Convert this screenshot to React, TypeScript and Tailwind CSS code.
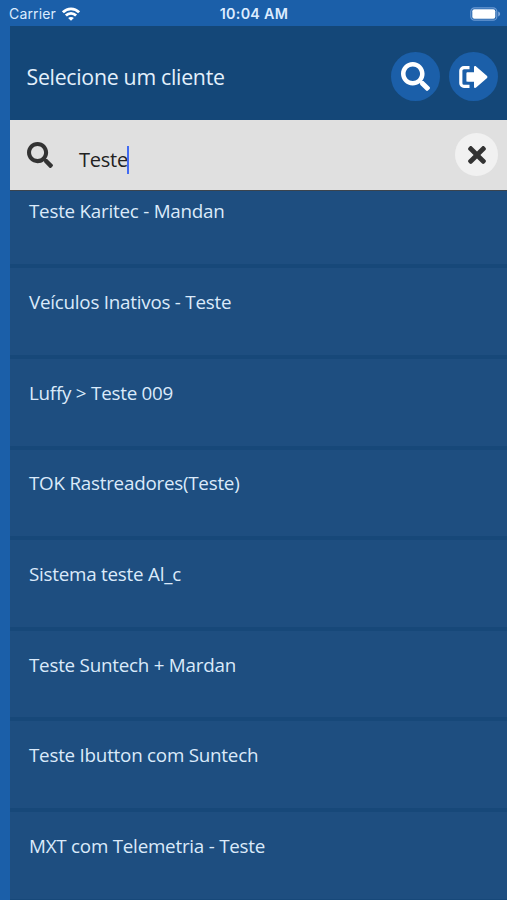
import { FaSearch, FaTimes } from 'react-icons/fa';

const clients = [
  'Teste Karitec - Mandan',
  'Veículos Inativos - Teste',
  'Luffy > Teste 009',
  'TOK Rastreadores(Teste)',
  'Sistema teste Al_c',
  'Teste Suntech + Mardan',
  'Teste Ibutton com Suntech',
  'MXT com Telemetria - Teste',
];

function StatusBar() {
  return (
    <div className="grid h-[25.5px] shrink-0 grid-cols-3 items-center pt-[2px] pr-[6px] pl-[9px] font-['Inter',sans-serif] text-[14px] leading-none text-[#dcecff]">
      <div className="flex items-center gap-[6px]">
        <span className="w-[47px] tracking-[0.15px]">Carrier</span>
        <svg className="h-[14px] w-[18px]" viewBox="0 0 18 14" fill="none" stroke="white" strokeWidth="2.8" aria-hidden="true">
          <path d="M.9 5.3C5.4.6 12.6.6 17.1 5.3M3.9 8.6c2.9-2.9 7.3-2.9 10.2 0" />
          <path d="M9 13.8 6.1 11c1.6-1.5 4.2-1.5 5.8 0Z" fill="white" stroke="none" />
        </svg>
      </div>
      <span className="-ml-[2px] text-center text-[14.3px] font-semibold tracking-[0.3px] whitespace-nowrap">10:04 AM</span>
      <svg className="h-[14px] w-[31px] justify-self-end" viewBox="0 0 31 14" aria-hidden="true">
        <rect x="0.8" y="0.8" width="26" height="12.4" rx="3.8" fill="none" stroke="#6c9ad2" strokeWidth="1.2" />
        <rect x="2.3" y="2.3" width="23" height="9.4" rx="2" fill="white" />
        <path d="M28.2 4.6c2.6.8 2.6 4 0 4.8Z" fill="#7fa7d8" />
      </svg>
    </div>
  );
}

function Header() {
  return (
    <header className="flex h-[94.5px] shrink-0 items-center justify-between bg-[#144778] pt-[8px] pr-[9px] pl-[17px]">
      <h1 className="pt-px text-[21.3px] tracking-[-0.28px] text-[#e3f0fc]">Selecione um cliente</h1>
      <div className="flex gap-[9px]">
        <button aria-label="Buscar" className="flex size-[49px] items-center justify-center rounded-full bg-[#1b5fa9] text-white">
          <FaSearch className="size-[29px]" />
        </button>
        <button aria-label="Sair" className="flex size-[49px] items-center justify-center rounded-full bg-[#1b5fa9] text-white">
          <svg className="h-[22px] w-[29px]" viewBox="0 0 29 22" fill="currentColor" aria-hidden="true">
            <path d="M10.5 1.6H5a3.2 3.2 0 0 0-3.2 3.2v12.4A3.2 3.2 0 0 0 5 20.4h5.5" fill="none" stroke="currentColor" strokeWidth="3.2" />
            <path d="M8.6 6.2H15V1.3c0-1.2 1.3-1.6 2.1-.8l10.7 9.3c.8.7.8 1.7 0 2.4l-10.7 9.3c-.8.8-2.1.4-2.1-.8v-4.9H8.600c-.8 0-1.2-.4-1.2-1.200V7.400c0-.8.4-1.200 1.200-1.200Z" />
          </svg>
        </button>
      </div>
    </header>
  );
}

function SearchBar() {
  return (
    <div className="flex h-[70.5px] shrink-0 items-center border-b border-[#3b444e] bg-[#e0e0e0] pr-[9px] pl-[17px] text-[#333]">
      <FaSearch className="size-[26px]" />
      <div className="mt-[11px] ml-[26.5px] flex flex-1 items-center text-[20px] tracking-[-0.25px] text-[#222]">
        <span>Teste</span>
        <span className="-ml-px h-[28px] w-[2px] bg-[#426bf2]" />
      </div>
      <button aria-label="Limpar" className="flex size-[43px] items-center justify-center rounded-full bg-[#f1f1f1]">
        <FaTimes className="size-[26px]" />
      </button>
    </div>
  );
}

export default function App() {
  return (
    <div className="flex h-[900px] w-[507px] flex-col overflow-hidden bg-[#1b5fa9] font-['Open_Sans',sans-serif]">
      <StatusBar />
      <main className="ml-[9.5px] flex min-h-0 flex-1 flex-col overflow-hidden">
        <Header />
        <SearchBar />
        {/* list is scrolled slightly under the search bar */}
        <div className="min-h-0 flex-1 overflow-hidden bg-[#1e4e80]">
          <ul className="-mt-[12.8px]">
            {clients.map((name) => (
              <li key={name} className="h-[90.64px] border-b-4 border-[#174879] pt-[20.7px] pl-[19.5px] text-[18.8px] leading-[26px] tracking-[-0.23px] text-[#dbeafa]">
                {name}
              </li>
            ))}
          </ul>
        </div>
      </main>
    </div>
  );
}
